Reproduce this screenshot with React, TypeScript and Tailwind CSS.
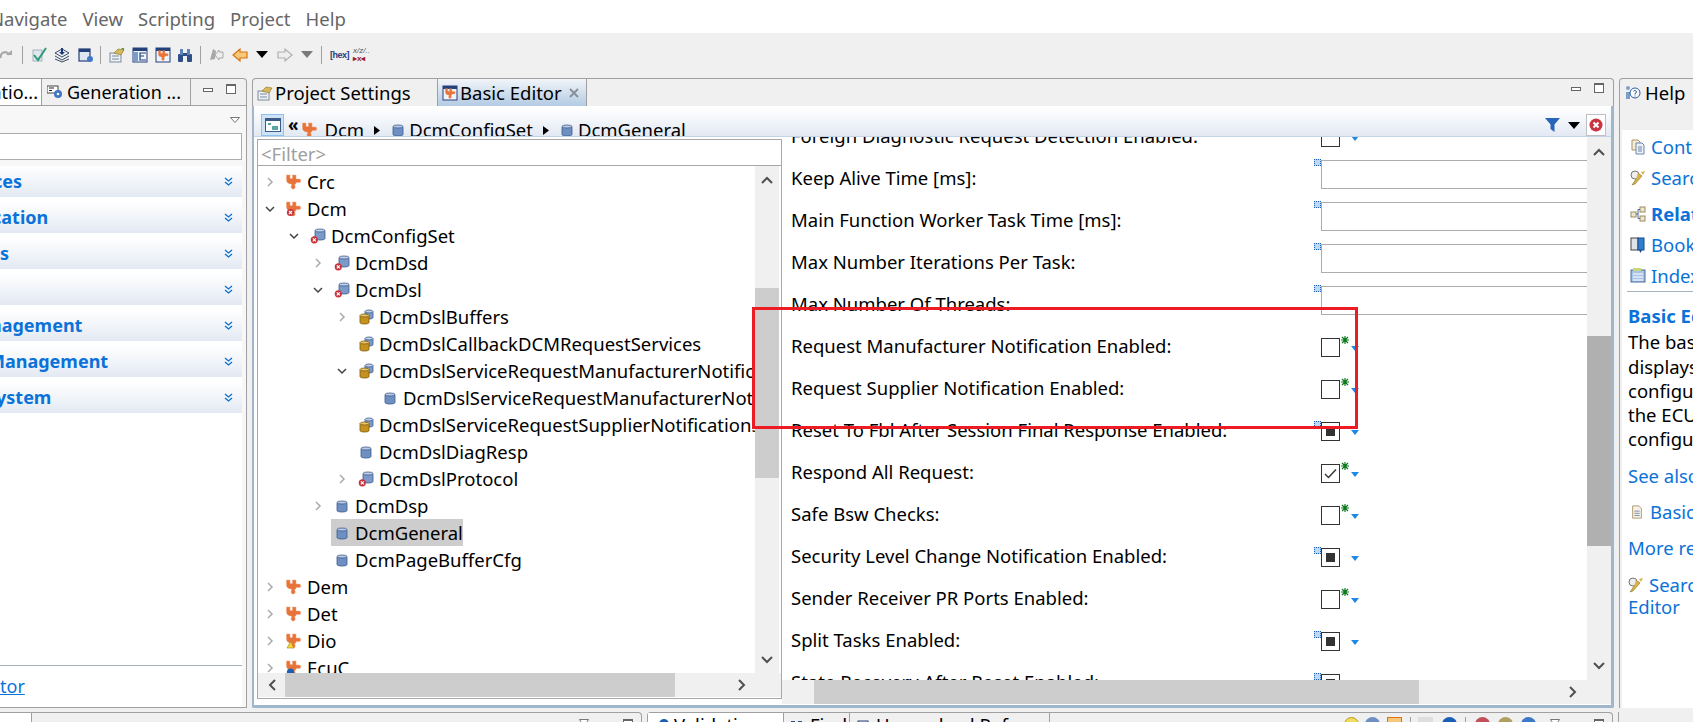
import React from 'react';

type IconProps = { children?: React.ReactNode; size?: number; className?: string };

const Ic: React.FC<IconProps> = ({ children, size = 16, className = '' }) => (
  <svg width={size} height={size} viewBox="0 0 16 16" className={`shrink-0 ${className}`}>
    {children}
  </svg>
);

const PuzzleShape = () => (
  <path
    d="M0.500 1h3.500v3.500h2.500V1H10v4h2.500a1.800 1.800 0 1 1 0 3.500H10V10H8.800v1.600a2.100 2.100 0 1 1-3.300 0V10C2 10 0.500 8 0.500 6z"
    fill="#e8733a"
    stroke="#f4a778"
    strokeWidth="0.5"
  />
);

const ErrBadge = ({ cx = 4.5, cy = 12 }: { cx?: number; cy?: number }) => (
  <g>
    <circle cx={cx} cy={cy} r="3.6" fill="#c8323c" />
    <path d={`M${cx - 1.5} ${cy - 1.5}l3 3m0-3l-3 3`} stroke="#fff" strokeWidth="1.200" />
  </g>
);

const Cyl = ({ x, y, w, h, fill, top, line }: { x: number; y: number; w: number; h: number; fill: string; top: string; line: string }) => (
  <g>
    <path d={`M${x} ${y + 1.5}v${h - 3}c0 2 ${w} 2 ${w} 0v-${h - 3}z`} fill={fill} stroke={line} strokeWidth="0.8" />
    <ellipse cx={x + w / 2} cy={y + 1.5} rx={w / 2} ry="1.500" fill={top} stroke={line} strokeWidth="0.8" />
  </g>
);

type TreeIconKind = 'puzzle' | 'puzzleErr' | 'puzzleWarn' | 'puzzleInfo' | 'db' | 'stackErr' | 'stackGold';

const TreeIcon = ({ kind }: { kind: TreeIconKind }) => {
  if (kind.startsWith('puzzle')) {
    return (
      <Ic>
        <PuzzleShape />
        {kind === 'puzzleErr' && <ErrBadge cx={4.500} cy={11.500} />}
        {kind === 'puzzleWarn' && <path d="M4.500 8.500l3.500 6.500H1z" fill="#f5d33c" stroke="#a08410" strokeWidth="0.6" />}
        {kind === 'puzzleInfo' && <circle cx="4.500" cy="12" r="3.600" fill="#1a5fb4" />}
      </Ic>
    );
  }
  if (kind === 'db') {
    return (
      <Ic>
        <Cyl x={3} y={3} w={10} h={11} fill="#6e8fc2" top="#b9cbe6" line="#3d5a8a" />
      </Ic>
    );
  }
  if (kind === 'stackErr') {
    return (
      <Ic>
        <Cyl x={5} y={1} w={10} h={11} fill="#7c9ac8" top="#c2d2ea" line="#3d5a8a" />
        <ErrBadge cx={4.300} cy={11.800} />
      </Ic>
    );
  }
  return (
    <Ic>
      <Cyl x={7} y={1} w={8} h={9} fill="#7c9ac8" top="#c2d2ea" line="#3d5a8a" />
      <Cyl x={2} y={5} w={9} h={10} fill="#c6921e" top="#e8c468" line="#7a5a10" />
    </Ic>
  );
};

const Chevron = ({ open }: { open?: boolean }) =>
  open ? (
    <svg width="10" height="10" viewBox="0 0 10 10" className="shrink-0">
      <path d="M1 3l4 4 4-4" fill="none" stroke="#444" strokeWidth="1.500" />
    </svg>
  ) : (
    <svg width="10" height="10" viewBox="0 0 10 10" className="shrink-0">
      <path d="M3 1l4 4-4 4" fill="none" stroke="#aaa" strokeWidth="1.500" />
    </svg>
  );

type TreeRow = { depth: number; label: string; icon: TreeIconKind; arrow?: 'open' | 'closed'; selected?: boolean };

const treeRows: TreeRow[] = [
  { depth: 0, label: 'Crc', icon: 'puzzle', arrow: 'closed' },
  { depth: 0, label: 'Dcm', icon: 'puzzleErr', arrow: 'open' },
  { depth: 1, label: 'DcmConfigSet', icon: 'stackErr', arrow: 'open' },
  { depth: 2, label: 'DcmDsd', icon: 'stackErr', arrow: 'closed' },
  { depth: 2, label: 'DcmDsl', icon: 'stackErr', arrow: 'open' },
  { depth: 3, label: 'DcmDslBuffers', icon: 'stackGold', arrow: 'closed' },
  { depth: 3, label: 'DcmDslCallbackDCMRequestServices', icon: 'stackGold' },
  { depth: 3, label: 'DcmDslServiceRequestManufacturerNotifications', icon: 'stackGold', arrow: 'open' },
  { depth: 4, label: 'DcmDslServiceRequestManufacturerNotifications', icon: 'db' },
  { depth: 3, label: 'DcmDslServiceRequestSupplierNotifications', icon: 'stackGold' },
  { depth: 3, label: 'DcmDslDiagResp', icon: 'db' },
  { depth: 3, label: 'DcmDslProtocol', icon: 'stackErr', arrow: 'closed' },
  { depth: 2, label: 'DcmDsp', icon: 'db', arrow: 'closed' },
  { depth: 2, label: 'DcmGeneral', icon: 'db', selected: true },
  { depth: 2, label: 'DcmPageBufferCfg', icon: 'db' },
  { depth: 0, label: 'Dem', icon: 'puzzle', arrow: 'closed' },
  { depth: 0, label: 'Det', icon: 'puzzle', arrow: 'closed' },
  { depth: 0, label: 'Dio', icon: 'puzzleWarn', arrow: 'closed' },
  { depth: 0, label: 'EcuC', icon: 'puzzleInfo', arrow: 'closed' },
];

type FormKind = 'input' | 'empty' | 'square' | 'check';
type FormRow = { label: string; kind: FormKind };

const formRows: FormRow[] = [
  { label: 'Foreign Diagnostic Request Detection Enabled:', kind: 'empty' },
  { label: 'Keep Alive Time [ms]:', kind: 'input' },
  { label: 'Main Function Worker Task Time [ms]:', kind: 'input' },
  { label: 'Max Number Iterations Per Task:', kind: 'input' },
  { label: 'Max Number Of Threads:', kind: 'input' },
  { label: 'Request Manufacturer Notification Enabled:', kind: 'empty' },
  { label: 'Request Supplier Notification Enabled:', kind: 'empty' },
  { label: 'Reset To Fbl After Session Final Response Enabled:', kind: 'square' },
  { label: 'Respond All Request:', kind: 'check' },
  { label: 'Safe Bsw Checks:', kind: 'empty' },
  { label: 'Security Level Change Notification Enabled:', kind: 'square' },
  { label: 'Sender Receiver PR Ports Enabled:', kind: 'empty' },
  { label: 'Split Tasks Enabled:', kind: 'square' },
  { label: 'State Recovery After Reset Enabled:', kind: 'square' },
];

const Marker = () => (
  <span className="absolute left-[-8px] top-[-2px] w-[7px] h-[7px] bg-[#bcd8f5] border border-dotted border-[#1a5fb4]" />
);

const Asterisk = () => (
  <svg width="8" height="8" viewBox="0 0 8 8" className="absolute left-[19px] top-[-3px]">
    <path d="M4 0v8M0 4h8M1 1l6 6M7 1l-6 6" stroke="#0b7a1e" strokeWidth="1.200" />
  </svg>
);

const BlueArrow = () => (
  <svg width="8" height="5" viewBox="0 0 8 5" className="absolute left-[29px] top-[7px]">
    <path d="M0 0h8L4 5z" fill="#1e88e5" />
  </svg>
);

const Control = ({ kind }: { kind: FormKind }) => {
  if (kind === 'input') {
    return (
      <div className="relative flex-1 self-start mt-[2px] h-[29px] border border-r-0 border-[#acacac] bg-white">
        <Marker />
      </div>
    );
  }
  return (
    <div className="relative self-start mt-[12px] w-[19px] h-[19px] border border-[#333] bg-white flex items-center justify-center">
      {kind === 'square' && <span className="w-[9px] h-[9px] bg-[#333]" />}
      {kind === 'check' && (
        <svg width="13" height="11" viewBox="0 0 13 11">
          <path d="M1 6l3.500 3.500L12 1.500" fill="none" stroke="#333" strokeWidth="1.400" />
        </svg>
      )}
      {kind === 'square' ? <Marker /> : <Asterisk />}
      <BlueArrow />
    </div>
  );
};

const ArrowGlyph = ({ dir }: { dir: 'up' | 'down' | 'left' | 'right' }) => {
  const d = { up: 'M1 8l5-5 5 5', down: 'M1 3l5 5 5-5', left: 'M8 1L3 6l5 5', right: 'M4 1l5 5-5 5' }[dir];
  return (
    <svg width="12" height="12" viewBox="0 0 12 12" className="shrink-0">
      <path d={d} fill="none" stroke="#505050" strokeWidth="2" />
    </svg>
  );
};

const MinMax = ({ gap = 'gap-[13px]' }: { gap?: string }) => (
  <div className={`flex items-start ${gap}`}>
    <span className="mt-[4px] w-[10px] h-[4px] border border-[#666] bg-white" />
    <span className="w-[10px] h-[10px] border border-[#666] border-t-2 bg-white" />
  </div>
);

const Sep = ({ className = '' }: { className?: string }) => <span className={`w-px h-[18px] bg-[#a0a0a0] shrink-0 ${className}`} />;

const Toolbar = () => (
  <div className="h-[45px] bg-[#f0f0f0] flex items-center pb-[2px] shrink-0">
    <Ic className="-ml-[1px]">
      <path d="M2 11a4 4 0 0 1 8-3" fill="none" stroke="#a8a8a8" strokeWidth="2.200" />
      <path d="M7 8h6V3z" fill="#a8a8a8" />
    </Ic>
    <Sep className="ml-[7px]" />
    <Ic className="ml-[9px]">
      <rect x="1" y="3" width="9" height="11" fill="#dfe8f0" stroke="#7a8a9a" strokeWidth="0.6" />
      <path d="M2 8l4 5 8-12" fill="none" stroke="#2f9a78" strokeWidth="2" />
    </Ic>
    <Ic className="ml-[6px]">
      <path d="M1 6l7-4 7 4-7 4z" fill="#eef2f7" stroke="#3a4a66" />
      <path d="M1 9l7 4 7-4M1 12l7 3 7-3" fill="none" stroke="#3a4a66" />
      <path d="M7 1h2v4h2l-3 3-3-3h2z" fill="#1a3a7a" />
    </Ic>
    <Ic className="ml-[8px]">
      <rect x="1" y="2" width="11" height="12" fill="#dde6f2" stroke="#24407a" strokeWidth="1.200" />
      <rect x="1" y="2" width="11" height="3" fill="#24407a" />
      <circle cx="12" cy="12" r="3" fill="#3f78c4" />
    </Ic>
    <Sep className="ml-[6px]" />
    <Ic className="ml-[8px]">
      <rect x="1" y="6" width="11" height="9" fill="#eef2f7" stroke="#7a8a9a" />
      <path d="M3 9h7M3 12h7" stroke="#7a8a9a" />
      <path d="M5 6l4-4 6 1-3 5z" fill="#d7b85a" stroke="#8a7326" strokeWidth="0.6" />
      <path d="M12 1h3v3z" fill="#5a9a3a" />
    </Ic>
    <Ic className="ml-[7px]">
      <rect x="1" y="1" width="14" height="14" fill="#eef4fb" stroke="#24407a" />
      <rect x="1" y="1" width="14" height="3" fill="#24407a" />
      <rect x="2" y="5" width="4" height="9" fill="#7a9ccc" />
      <path d="M14 6H8v7h6M8 9h4" fill="none" stroke="#24407a" strokeWidth="1.200" />
    </Ic>
    <Ic className="ml-[7px]">
      <rect x="1" y="1" width="14" height="14" fill="#eef4fb" stroke="#24407a" />
      <rect x="1" y="1" width="14" height="3" fill="#24407a" />
      <g transform="translate(3 3) scale(0.700)">
        <PuzzleShape />
      </g>
    </Ic>
    <Ic className="ml-[6px]">
      <rect x="1" y="7" width="5" height="8" rx="1" fill="#2f4f86" />
      <rect x="10" y="7" width="5" height="8" rx="1" fill="#2f4f86" />
      <rect x="3" y="2" width="3" height="6" fill="#5f82b8" />
      <rect x="10" y="2" width="3" height="6" fill="#5f82b8" />
      <rect x="6" y="6" width="4" height="3" fill="#2f4f86" />
    </Ic>
    <Sep className="ml-[7px]" />
    <Ic className="ml-[7px]">
      <path d="M2 13l3-11 3 2-1 8z" fill="#a8a8a8" />
      <path d="M15 5v6h-4v2L7 8l4-5v2z" fill="#eee" stroke="#aaa" />
    </Ic>
    <Ic className="ml-[8px]">
      <path d="M15 5v6H8v3L1 8l7-6v3z" fill="#f7c77a" stroke="#d9730d" strokeWidth="1.200" />
    </Ic>
    <svg width="12" height="7" viewBox="0 0 12 7" className="ml-[8px] shrink-0">
      <path d="M0 0h12L6 7z" fill="#000" />
    </svg>
    <Ic className="ml-[9px]">
      <path d="M1 5v6h7v3l7-6-7-6v3z" fill="#eee" stroke="#b0b0b0" strokeWidth="1.200" />
    </Ic>
    <svg width="12" height="7" viewBox="0 0 12 7" className="ml-[8px] shrink-0">
      <path d="M0 0h12L6 7z" fill="#7a7a7a" />
    </svg>
    <Sep className="ml-[8px]" />
    <span className="ml-[8px] w-[17px] text-left text-[9px] leading-[14px] font-bold text-[#1f3f80] font-['Liberation_Sans',sans-serif] whitespace-nowrap tracking-[-0.5px]">[hex]</span>
    <span className="ml-[6px] flex flex-col items-start leading-none">
      <span className="text-[8px] leading-[9px] text-[#555] font-['Liberation_Sans',sans-serif] italic whitespace-nowrap">x/z/..</span>
      <span className="text-[8px] leading-[8px] font-bold text-[#9c1c3c] font-['Liberation_Sans',sans-serif] whitespace-nowrap">▸x◂</span>
    </span>
  </div>
);

const sections = [
  { label: 'ces', cls: '-ml-[7px]' },
  { label: 'cation', cls: '-ml-[8px]' },
  { label: 's', cls: '' },
  { label: '', cls: '' },
  { label: 'nagement', cls: '-ml-[10px]' },
  { label: 'Management', cls: '-ml-[12px]' },
  { label: 'ystem', cls: '-ml-[4px]' },
];

const DoubleDown = () => (
  <svg width="9" height="10" viewBox="0 0 9 10" className="shrink-0">
    <path d="M1 1l3.500 3L8 1M1 5l3.500 3L8 5" fill="none" stroke="#0a6fd0" strokeWidth="1.300" />
  </svg>
);

const LeftPanel = () => (
  <div className="w-[247px] shrink-0 flex flex-col border-r border-b border-t border-[#a0a0a0] rounded-tr-[4px] overflow-hidden">
    <div className="h-[27px] flex items-stretch border-b border-[#a0a0a0] shrink-0 text-[18px]">
      <div className="w-[42px] bg-white border-r border-[#a0a0a0] flex items-center justify-end pr-[3px]">atio...</div>
      <div className="w-[149px] border-r border-[#a0a0a0] flex items-center pl-[5px] gap-[4px] whitespace-nowrap">
        <Ic>
          <rect x="0" y="2" width="11" height="7" fill="#fff" stroke="#444" />
          <path d="M2 4h5M2 6.500h3" stroke="#222" />
          <circle cx="11" cy="10" r="4" fill="#3f78c4" />
          <circle cx="11" cy="10" r="1.300" fill="#fff" />
        </Ic>
        Generation ...
      </div>
      <div className="ml-[12px] pt-[5px]">
        <MinMax />
      </div>
    </div>
    <div className="flex-1 bg-[#f7f7f7] flex flex-col pr-[4px]">
      <div className="h-[27px] flex items-center justify-end pr-[2px] shrink-0">
        <svg width="10" height="6" viewBox="0 0 10 6">
          <path d="M0.500 0.500h9L5 5.500z" fill="#fff" stroke="#777" />
        </svg>
      </div>
      <div className="h-[27px] bg-white border border-l-0 border-[#acacac] shrink-0" />
      <div className="mt-[6px] flex flex-col gap-[5px] shrink-0 bg-white">
        {sections.map((s, i) => (
          <div key={i} className="h-[31px] bg-gradient-to-b from-white to-[#e3e9f3] flex items-center justify-between pr-[9px] text-[18px] font-bold text-[#0a72d8] overflow-hidden">
            <span className={s.cls}>{s.label}</span>
            <DoubleDown />
          </div>
        ))}
      </div>
      <div className="flex-1 bg-white flex flex-col justify-end">
        <div className="h-px bg-[#a8b0bd]" />
        <div className="h-[41px] flex items-start">
          <span className="mt-[6px] text-[18px] leading-[28px] text-[#0a72d8] underline">tor</span>
        </div>
      </div>
    </div>
  </div>
);

const HScroll = ({ thumbClass, rightClass }: { thumbClass: string; rightClass: string }) => (
  <div className="h-[24px] bg-[#f0f0f0] flex items-center shrink-0">
    <div className={`h-full bg-[#cdcdcd] ${thumbClass}`} />
    <span className={rightClass}>
      <ArrowGlyph dir="right" />
    </span>
  </div>
);

const TreePane = () => (
  <div className="w-[525px] h-[560px] mt-[2px] ml-[3px] shrink-0 flex flex-col border border-[#a8a8a8] bg-white">
    <div className="h-[26px] border-b border-[#a8a8a8] flex items-center pl-[3px] pt-[3px] text-[#a0a0a0] shrink-0">&lt;Filter&gt;</div>
    <div className="h-[507px] flex shrink-0 pr-[2px]">
      <div className="flex-1 min-w-0 overflow-hidden pt-[2px]">
        {treeRows.map((r, i) => (
          <div key={i} className="h-[27px] flex items-center whitespace-nowrap text-black" style={{ paddingLeft: 7 + r.depth * 24 }}>
            <span className="w-[10px] shrink-0 flex">{r.arrow && <Chevron open={r.arrow === 'open'} />}</span>
            <span className={`flex items-center h-full ml-[8px] pl-[3px] gap-[5px] ${r.selected ? 'bg-[#cdcdcd]' : ''}`}>
              <TreeIcon kind={r.icon} />
              {r.label}
            </span>
          </div>
        ))}
      </div>
      <div className="w-[24px] bg-[#f0f0f0] flex flex-col items-center shrink-0">
        <span className="mt-[9px]">
          <ArrowGlyph dir="up" />
        </span>
        <div className="mt-[101px] w-full h-[190px] bg-[#cdcdcd] shrink-0" />
        <span className="mt-auto mb-[7px]">
          <ArrowGlyph dir="down" />
        </span>
      </div>
    </div>
    <div className="h-[24px] bg-[#f0f0f0] flex items-center shrink-0">
      <span className="ml-[9px] w-[18px]">
        <ArrowGlyph dir="left" />
      </span>
      <div className="h-full w-[390px] bg-[#cdcdcd]" />
      <span className="ml-[60px]">
        <ArrowGlyph dir="right" />
      </span>
    </div>
  </div>
);

const FormPane = () => (
  <div className="flex-1 min-w-0 flex flex-col">
    <div className="flex h-[543px] shrink-0">
      <div className="flex-1 min-w-0 overflow-hidden bg-white">
        <div className="-mt-[21px]">
          {formRows.map((r) => (
            <div key={r.label} className="h-[42px] flex">
              <div className="w-[539px] shrink-0 pl-[9px] pb-[2px] flex items-center text-black whitespace-nowrap">{r.label}</div>
              <Control kind={r.kind} />
            </div>
          ))}
        </div>
      </div>
      <div className="w-[24px] bg-[#f0f0f0] flex flex-col items-center shrink-0">
        <span className="mt-[10px]">
          <ArrowGlyph dir="up" />
        </span>
        <div className="mt-[177px] w-full h-[210px] bg-[#b0b0b0] shrink-0" />
        <span className="mt-auto mb-[8px]">
          <ArrowGlyph dir="down" />
        </span>
      </div>
    </div>
    <HScroll thumbClass="ml-[32px] w-[605px]" rightClass="ml-[147px]" />
  </div>
);

const Crumb = ({ label }: { label: string }) => (
  <>
    <TreeIcon kind="db" />
    <span className="ml-[3px]">{label}</span>
  </>
);

const CrumbArrow = () => (
  <svg width="6" height="9" viewBox="0 0 6 9" className="shrink-0 mx-[10px]">
    <path d="M0 0l6 4.500L0 9z" fill="#000" />
  </svg>
);

const EditorHeader = () => (
  <div className="h-[29px] shrink-0 bg-gradient-to-b from-white to-[#e3e9f3] border-b border-[#c5d3e6] flex items-start overflow-hidden text-black whitespace-nowrap">
    <div className="ml-[7px] mt-[6px] w-[23px] h-[22px] bg-[#cfe3f7] border border-[#8fc1f0] flex items-center justify-center shrink-0">
      <svg width="16" height="14" viewBox="0 0 16 14">
        <rect x="0.500" y="0.500" width="15" height="13" fill="#fff" stroke="#3a5a8a" />
        <rect x="1" y="1" width="14" height="2" fill="#3a5a8a" />
        <path d="M3 5h3v2H3zM7 8h6v4H7z" fill="#5aa6a0" />
      </svg>
    </div>
    <span className="ml-[4px] mt-[5px] text-[17px] leading-[24px] font-bold">«</span>
    <div className="ml-[4px] mt-[8px] flex items-center h-[28px]">
      <Ic>
        <PuzzleShape />
      </Ic>
      <span className="ml-[6px]">Dcm</span>
      <CrumbArrow />
      <Crumb label="DcmConfigSet" />
      <CrumbArrow />
      <Crumb label="DcmGeneral" />
    </div>
    <div className="ml-auto mt-[6px] flex items-center shrink-0 pr-[5px] h-[22px]">
      <svg width="15" height="14" viewBox="0 0 15 14">
        <path d="M0 0h15L9.500 6.500V14L5.500 11V6.500z" fill="#2a66b8" />
      </svg>
      <svg width="12" height="7" viewBox="0 0 12 7" className="ml-[8px]">
        <path d="M0 0h12L6 7z" fill="#000" />
      </svg>
      <div className="ml-[6px] w-[20px] h-[22px] bg-white border border-[#c0c0c0] flex items-center justify-center">
        <svg width="14" height="14" viewBox="0 0 14 14">
          <circle cx="7" cy="7" r="6.500" fill="#cc3340" />
          <path d="M4.500 4.500l5 5m0-5l-5 5" stroke="#fff" strokeWidth="2" />
        </svg>
      </div>
    </div>
  </div>
);

const CenterPanel = () => (
  <div className="w-[1362px] shrink-0 ml-[5px] flex flex-col">
    <div className="h-[28px] flex items-stretch border-t border-l border-r border-[#a0a0a0] rounded-t-[4px] shrink-0">
      <div className="w-[185px] flex items-center gap-[2px] pl-[4px] border-r border-[#a0a0a0] whitespace-nowrap">
        <Ic>
          <rect x="1" y="6" width="11" height="9" fill="#eef2f7" stroke="#7a8a9a" />
          <path d="M3 9h7M3 12h7" stroke="#7a8a9a" />
          <path d="M5 6l4-4 6 1-3 5z" fill="#d7b85a" stroke="#8a7326" strokeWidth="0.6" />
        </Ic>
        Project Settings
      </div>
      <div className="w-[149px] flex items-center gap-[2px] pl-[4px] border-r border-[#a0a0a0] bg-gradient-to-b from-[#f2f5f9] to-[#b3cbe3] whitespace-nowrap">
        <Ic>
          <rect x="1" y="1" width="14" height="14" fill="#eef4fb" stroke="#24407a" />
          <rect x="1" y="1" width="14" height="3" fill="#24407a" />
          <g transform="translate(3 3) scale(0.700)">
            <PuzzleShape />
          </g>
        </Ic>
        Basic Editor
        <svg width="10" height="10" viewBox="0 0 10 10" className="ml-[5px]">
          <path d="M1 1l8 8m0-8l-8 8" stroke="#8a9099" strokeWidth="2" />
        </svg>
      </div>
      <div className="ml-auto pt-[4px] pr-[9px]">
        <MinMax />
      </div>
    </div>
    <div className="h-[602px] border-[3px] border-t-0 border-[#9fb6cd] border-l-2 bg-white flex flex-col shrink-0 rounded-b-[2px] pt-[2px]">
      <EditorHeader />
      <div className="flex-1 min-h-0 flex overflow-hidden">
        <TreePane />
        <FormPane />
      </div>
    </div>
  </div>
);

const helpLink = 'text-[#0a72d8]';

const HelpRow = ({ icon, label, bold }: { icon: React.ReactNode; label: string; bold?: boolean }) => (
  <div className={`h-[31px] flex items-center pl-[8px] gap-[5px] ${helpLink} ${bold ? 'font-bold' : ''}`}>
    {icon}
    {label}
  </div>
);

const PageIcon = () => (
  <Ic>
    <path d="M2 1h6l2 2v8H2z" fill="#f4ecd8" stroke="#a89468" />
    <path d="M6 4h6l2 2v9H6z" fill="#eef2f8" stroke="#6a84a8" />
    <path d="M8 8h4M8 10h4M8 12h4" stroke="#6a84a8" />
  </Ic>
);

const KeyIcon = () => (
  <Ic>
    <circle cx="5" cy="5" r="4" fill="#eee" stroke="#777" />
    <path d="M6 9L2 15l3-1 7-8-4-3" fill="#d8b24a" stroke="#8a7326" strokeWidth="0.6" />
    <path d="M11 2l4-1-2 4z" fill="#d8b24a" />
  </Ic>
);

const RelatedIcon = () => (
  <Ic>
    <rect x="1" y="6" width="5" height="5" fill="#efe6cf" stroke="#9a8a60" />
    <rect x="10" y="1" width="5" height="5" fill="#efe6cf" stroke="#9a8a60" />
    <rect x="10" y="10" width="5" height="5" fill="#efe6cf" stroke="#9a8a60" />
    <path d="M6 8h2V3.500h2M8 8v4.500h2" fill="none" stroke="#4a6a9a" />
  </Ic>
);

const BookIcon = () => (
  <Ic>
    <rect x="1" y="1" width="7" height="12" fill="#dfe3e8" stroke="#444" />
    <rect x="8" y="1" width="6" height="12" fill="#2f7fd0" stroke="#1a4a88" />
    <path d="M9 13l1.500 3 1.500-3z" fill="#1a4a88" />
  </Ic>
);

const IndexIcon = () => (
  <Ic>
    <rect x="1" y="2" width="14" height="12" fill="#a8c4e6" stroke="#4a6a9a" />
    <rect x="3" y="0" width="8" height="3" fill="#c8d878" />
    <path d="M3 6h10M3 9h10M3 12h10" stroke="#fff" />
  </Ic>
);

const HelpPanel = () => (
  <div className="flex-1 ml-[5px] flex flex-col border-l border-t border-[#a0a0a0] rounded-tl-[4px] min-w-0 whitespace-nowrap overflow-hidden">
    <div className="h-[27px] flex items-center pl-[5px] gap-[4px] shrink-0">
      <Ic>
        <circle cx="3" cy="3" r="2" fill="#7aa0cc" />
        <path d="M1 14V7h4v7z" fill="#7aa0cc" />
        <circle cx="10" cy="8" r="5" fill="#fff" stroke="#2a5a9a" />
        <path d="M8.500 6.500a1.500 1.500 0 1 1 1.500 2v1M10 10.500v1" fill="none" stroke="#2a5a9a" />
      </Ic>
      Help
      <span className="text-[#555] ml-[3px]">:</span>
    </div>
    <div className="h-[24px] shrink-0" />
    <div className="flex-1 bg-white ml-[2px] pt-px">
      <HelpRow icon={<PageIcon />} label="Contents" />
      <HelpRow icon={<KeyIcon />} label="Search" />
      <div className="mt-[5px]">
        <HelpRow icon={<RelatedIcon />} label="Related" bold />
      </div>
      <HelpRow icon={<BookIcon />} label="Bookmarks" />
      <HelpRow icon={<IndexIcon />} label="Index" />
      <div className="ml-[5px] h-px bg-[#a8b0bd]" />
      <div className="ml-[6px] mt-[12px] leading-[24.300px]">
        <div className="font-bold text-[#0a72d8] mb-[2px]">Basic Editor</div>
        <div className="text-black">The basic</div>
        <div className="text-black">displays</div>
        <div className="text-black">configuration</div>
        <div className="text-black">the ECU</div>
        <div className="text-black">configuration</div>
        <div className={`mt-[12px] ${helpLink}`}>See also</div>
        <div className={`mt-[12px] flex items-center gap-[6px] ml-[2px] ${helpLink}`}>
          <Ic size={14}>
            <path d="M3 1h7l3 3v11H3z" fill="#f7f2e6" stroke="#a89468" />
            <path d="M5 7h6M5 9.500h6M5 12h6" stroke="#6a84a8" />
          </Ic>
          Basic
        </div>
        <div className={`mt-[12px] ${helpLink}`}>More results</div>
        <div className={`mt-[12px] flex items-center gap-[5px] ${helpLink}`}>
          <KeyIcon />
          Search
        </div>
        <div className={`-mt-[2px] ${helpLink}`}>Editor</div>
      </div>
    </div>
  </div>
);

const BottomTab = ({ width, label, children, white }: { width: string; label: string; children?: React.ReactNode; white?: boolean }) => (
  <div className={`${width} h-[30px] border-r border-[#a0a0a0] flex items-start pl-[6px] gap-[4px] leading-[24px] whitespace-nowrap ${white ? 'bg-white' : ''}`}>
    <span className="mt-[5px]">{children}</span>
    {label}
  </div>
);

const BottomBar = () => (
  <div className="h-[14px] mt-[4px] flex shrink-0">
    <div className="w-[642px] border-t border-r border-[#a0a0a0] rounded-tr-[4px] flex items-start shrink-0">
      <div className="w-[32px] h-full bg-white border-r border-[#a0a0a0]" />
      <div className="ml-auto pr-[8px] pt-[6px] flex items-start gap-[11px]">
        <svg width="10" height="8" viewBox="0 0 10 8">
          <path d="M0.500 0.500h9L5 7.500z" fill="#fff" stroke="#777" />
        </svg>
        <MinMax />
      </div>
    </div>
    <div className="w-[966px] ml-[5px] border-t border-l border-r border-[#a0a0a0] rounded-t-[4px] flex items-start shrink-0">
      <BottomTab width="w-[136px]" label="Validation" white>
        <Ic>
          <circle cx="10" cy="6" r="5" fill="#1a5fb4" />
        </Ic>
      </BottomTab>
      <BottomTab width="w-[66px]" label="Find">
        <Ic>
          <rect x="1" y="3" width="4" height="6" fill="#2f4f86" />
          <rect x="8" y="3" width="4" height="6" fill="#2f4f86" />
        </Ic>
      </BottomTab>
      <BottomTab width="w-[200px]" label="Unresolved References">
        <Ic>
          <rect x="2" y="3" width="10" height="10" fill="#dde6f2" stroke="#24407a" />
        </Ic>
      </BottomTab>
      <div className="ml-auto pr-[8px] pt-[4px] flex items-start">
        <span className="w-[15px] h-[15px] rounded-full bg-[#f2dc60] border border-[#b89a20]" />
        <span className="ml-[6px] w-[15px] h-[15px] rounded-full bg-[#6f8fc2]" />
        <span className="ml-[7px] w-[15px] h-[15px] bg-[#f7c77a] border border-[#d9730d]" />
        <Sep className="ml-[8px]" />
        <span className="ml-[7px] w-[15px] h-[15px] bg-[#dedede]" />
        <span className="ml-[9px] w-[15px] h-[15px] rounded-t-full bg-[#1a5fb4]" />
        <Sep className="ml-[8px]" />
        <span className="ml-[9px] w-[15px] h-[15px] rounded-full bg-[#c0505a]" />
        <span className="ml-[8px] w-[15px] h-[15px] rounded-t-full bg-[#b0a060]" />
        <span className="ml-[8px] w-[15px] h-[15px] rounded-full bg-[#3f78c4]" />
        <svg width="10" height="8" viewBox="0 0 10 8" className="ml-[14px] mt-[2px]">
          <path d="M0.500 0.500h9L5 7.500z" fill="#fff" stroke="#777" />
        </svg>
        <div className="ml-[11px] mt-[2px]">
          <MinMax />
        </div>
      </div>
    </div>
    <div className="flex-1 ml-[5px] border-l border-[#a0a0a0]" />
  </div>
);

export default function App() {
  return (
    <div className="relative w-[1693px] h-[722px] overflow-hidden bg-[#f0f0f0] flex flex-col font-['Noto_Sans',sans-serif] text-[18.5px] text-black">
      <div className="h-[33px] bg-white flex items-center gap-[15px] text-[#666] shrink-0 -ml-[10px] pt-[5px] whitespace-nowrap">
        <span>Navigate</span>
        <span>View</span>
        <span>Scripting</span>
        <span>Project</span>
        <span>Help</span>
      </div>
      <Toolbar />
      <div className="h-[630px] flex shrink-0">
        <LeftPanel />
        <CenterPanel />
        <HelpPanel />
      </div>
      <BottomBar />
      {/* the red box is drawn over the page, it was marked on the screenshot */}
      <div className="absolute left-[752px] top-[307px] w-[606px] h-[122px] border-[3px] border-[#ed1c24]" />
    </div>
  );
}
